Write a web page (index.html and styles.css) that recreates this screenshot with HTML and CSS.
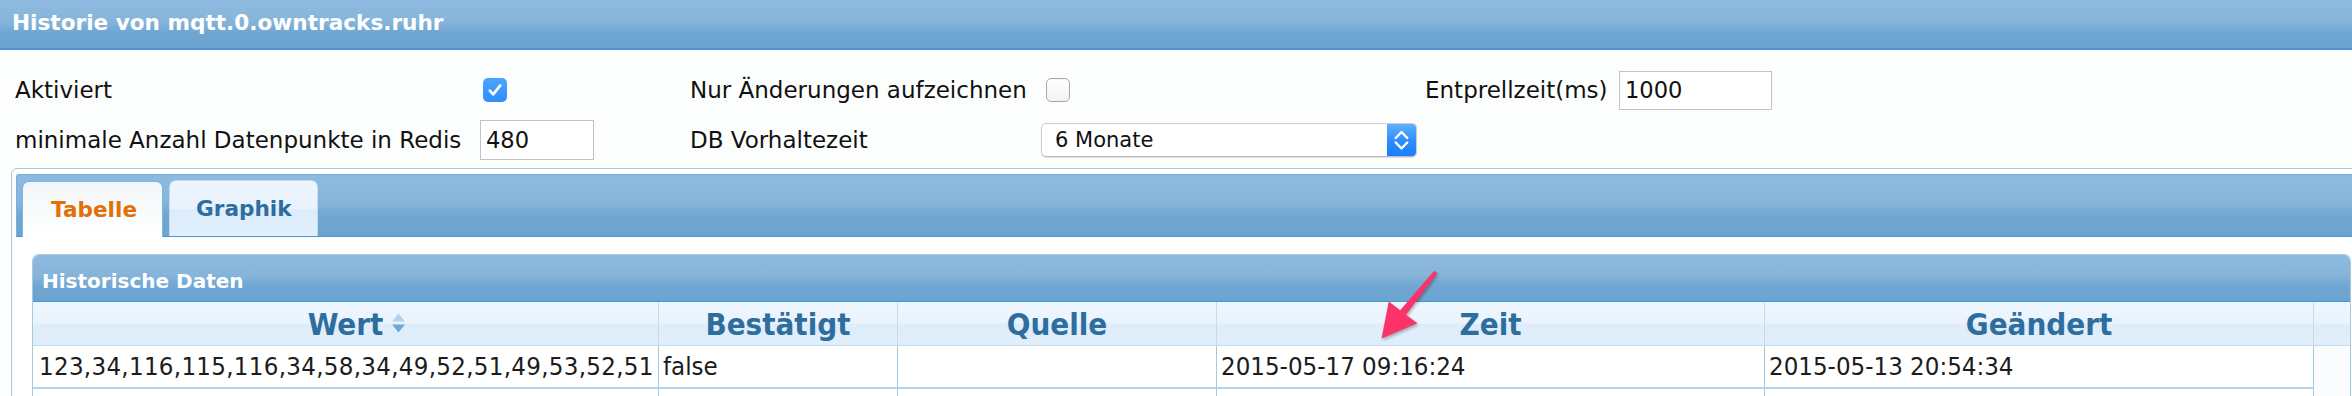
FILE: index.html
```html
<!DOCTYPE html>
<html lang="de">
<head>
<meta charset="utf-8">
<title>Historie von mqtt.0.owntracks.ruhr</title>
<link rel="stylesheet" href="styles.css">
</head>
<body>
<div class="page">
  <div class="titlebar wave">Historie von mqtt.0.owntracks.ruhr</div>

  <div class="form">
    <div class="lbl">Aktiviert</div>
    <div class="cell"><span class="cb checked"><svg width="24" height="24" viewBox="0 0 24 24"><path d="M6.8 12.6 L10.2 16.4 L17.3 7.4" fill="none" stroke="#fff" stroke-width="2.6" stroke-linecap="round" stroke-linejoin="round"/></svg></span></div>
    <div class="lbl">Nur Änderungen aufzeichnen</div>
    <div class="cell"><span class="cb unchecked"></span></div>
    <div class="lbl">Entprellzeit(ms)</div>
    <div class="cell"><input class="txt txt-wide" type="text" value="1000"></div>

    <div class="lbl">minimale Anzahl Datenpunkte in Redis</div>
    <div class="cell"><input class="txt txt-narrow" type="text" value="480"></div>
    <div class="lbl">DB Vorhaltezeit</div>
    <div class="cell">
      <div class="select">
        <span class="select-text">6 Monate</span>
        <span class="stepper"><svg width="29" height="34" viewBox="0 0 29 34"><path d="M8.7 15 L14.5 9 L20.3 15 M8.7 19.5 L14.5 25.5 L20.3 19.5" fill="none" stroke="#fff" stroke-width="2.4" stroke-linecap="round" stroke-linejoin="round"/></svg></span>
      </div>
    </div>
    <div class="cell"></div>
    <div class="cell"></div>
  </div>

  <div class="tabs">
    <div class="tabnav wave">
      <div class="tab tab-active">Tabelle</div>
      <div class="tab tab-idle">Graphik</div>
    </div>
    <div class="panel">
      <div class="gridbox">
        <div class="caption wave">Historische Daten</div>
        <table class="data">
          <colgroup>
            <col class="c1"><col class="c2"><col class="c3"><col class="c4"><col class="c5"><col class="c6">
          </colgroup>
          <thead>
            <tr>
              <th><span class="sortable">Wert<span class="sorticon"><svg width="15" height="20" viewBox="0 0 15 20"><path d="M7.5 0.5 L14 8.5 L1 8.5 Z" fill="#b3d2ec"/><path d="M1 11.5 L14 11.5 L7.5 19.5 Z" fill="#6ea8d8"/></svg></span></span></th>
              <th>Bestätigt</th>
              <th>Quelle</th>
              <th>Zeit</th>
              <th>Geändert</th>
              <th class="gutter-h"></th>
            </tr>
          </thead>
          <tbody>
            <tr>
              <td class="first">123,34,116,115,116,34,58,34,49,52,51,49,53,52,51</td>
              <td>false</td>
              <td></td>
              <td>2015-05-17 09:16:24</td>
              <td>2015-05-13 20:54:34</td>
              <td class="gutter"></td>
            </tr>
            <tr>
              <td class="first"></td>
              <td></td>
              <td></td>
              <td></td>
              <td></td>
              <td class="gutter"></td>
            </tr>
          </tbody>
        </table>
      </div>
    </div>
  </div>

  <svg class="arrow" width="2352" height="396" viewBox="0 0 2352 396">
    <path d="M1433.6 271.6 Q1435.3 270.6 1436.6 272.2 Q1437.4 273.4 1436.4 274.6 L1406 314.8 L1417.5 323.2 L1381.5 338.5 L1388.8 301.5 L1400.2 310.2 Z" fill="#fc3268"/>
  </svg>
</div>
</body>
</html>
```

FILE: styles.css
```css
html, body {
  margin: 0;
  padding: 0;
  overflow: hidden;
  background: #fcfdfd;
}

.page {
  position: relative;
  width: 2372px;
  font-family: "DejaVu Sans", "Liberation Sans", sans-serif;
  color: #1e1e1e;
}

.wave {
  background: linear-gradient(180deg, #8dbade 0%, #88b6db 38%, #82b2d9 50%, #76abd5 58%, #6fa6d2 70%, #6ca4d1 100%);
}

.titlebar {
  height: 48px;
  line-height: 45px;
  border-bottom: 2px solid #4a94d4;
  padding-left: 12px;
  color: #fff;
  font-weight: bold;
  font-size: 21.6px;
  white-space: nowrap;
}

.form {
  display: grid;
  grid-template-columns: 464px 211px 351px 384px 194px 200px;
  grid-template-rows: 50px 50px;
  align-items: center;
  padding: 15px 0 3px 15px;
  font-size: 23px;
  color: #111;
  background: #fcfefd;
}

.lbl {
  white-space: nowrap;
}

.cell {
  display: flex;
  align-items: center;
}

.cb {
  display: block;
  width: 24px;
  height: 24px;
  box-sizing: border-box;
  border-radius: 5px;
}

.cb svg {
  display: block;
}

.cb.checked {
  margin-left: 4px;
  background: linear-gradient(180deg, #4ba4fe 0%, #2f8dfc 100%);
}

.cb.unchecked {
  margin-left: 5px;
  border: 1px solid #a9a9a9;
  background: linear-gradient(180deg, #ffffff 0%, #f3f3f3 100%);
  box-shadow: inset 0 1px 1px rgba(0, 0, 0, 0.05);
}

.txt {
  display: block;
  box-sizing: border-box;
  margin: 0;
  border: 1px solid #c3c3c3;
  background: #fff;
  font-family: "DejaVu Sans", "Liberation Sans", sans-serif;
  font-size: 22.6px;
  color: #111;
  padding: 0 0 0 5px;
  outline: none;
}

.txt-narrow {
  width: 114px;
  height: 40px;
  margin-left: 1px;
}

.txt-wide {
  width: 153px;
  height: 39px;
}

.select {
  display: flex;
  width: 376px;
  height: 34px;
  box-sizing: border-box;
  border: 1px solid #cfcfcf;
  border-bottom-color: #b9b9b9;
  border-radius: 5px;
  background: #fff;
  box-shadow: 0 1px 1px rgba(0, 0, 0, 0.12);
  overflow: hidden;
}

.select-text {
  flex: 1;
  padding-left: 13px;
  font-size: 21px;
  line-height: 32px;
  color: #111;
}

.stepper {
  width: 29px;
  background: linear-gradient(180deg, #5eb0fe 0%, #2b8cfc 55%, #1a7ffb 100%);
}

.stepper svg {
  display: block;
  margin-top: -1px;
}

/* Tabs */
.tabs {
  margin-left: 11px;
  border: 1px solid #a6c9e2;
  border-radius: 6px 6px 0 0;
  padding: 5px 4px 0 4px;
  background: #fff;
}

.tabnav {
  display: flex;
  align-items: flex-end;
  gap: 6px;
  height: 63px;
  box-sizing: border-box;
  padding-left: 5px;
  border: 1px solid #78afdc;
  border-bottom-color: #4297d7;
  border-radius: 3px 3px 0 0;
}

.tab {
  height: 56px;
  box-sizing: border-box;
  border: 1px solid #c5dbec;
  border-bottom: 0;
  border-radius: 7px 7px 0 0;
  line-height: 55px;
  font-size: 21.6px;
  font-weight: bold;
  white-space: nowrap;
}

.tab-active {
  margin-bottom: -1px;
  padding: 0 25px 0 28px;
  border-color: #79b7e7;
  background: linear-gradient(180deg, #f3f6f8 0%, #f8fafb 50%, #ffffff 100%);
  color: #e17009;
}

.tab-idle {
  padding: 0 25px 0 26px;
  background: linear-gradient(180deg, #edf5fe 0%, #e9f3fd 50%, #dcecfb 52%, #e2effc 100%);
  color: #2e6e9e;
}

.panel {
  padding: 17px 16px 0 16px;
  background: #fff;
}

.gridbox {
  border: 1px solid #a6c9e2;
  border-bottom: 0;
  border-radius: 7px 7px 0 0;
  overflow: hidden;
}

.caption {
  height: 40px;
  padding: 6px 0 0 9px;
  line-height: 40px;
  border-bottom: 1px solid #4297d7;
  color: #fff;
  font-weight: bold;
  font-size: 20px;
  white-space: nowrap;
}

.data {
  table-layout: fixed;
  border-collapse: separate;
  border-spacing: 0;
  width: 2317px;
}

.c1 { width: 626px; }
.c2 { width: 239px; }
.c3 { width: 319px; }
.c4 { width: 548px; }
.c5 { width: 549px; }
.c6 { width: 36px; }

.data th {
  height: 44px;
  padding: 0;
  box-sizing: border-box;
  border-right: 1px solid #c5dbec;
  border-bottom: 1px solid #c5dbec;
  background: linear-gradient(180deg, #eef6fe 0%, #ebf4fd 48%, #dfedfb 52%, #e0eefb 100%);
  color: #2e6e9e;
  font-family: "DejaVu Sans Condensed", "DejaVu Sans", sans-serif;
  font-stretch: condensed;
  font-weight: bold;
  font-size: 31px;
  line-height: 42px;
  text-align: center;
  white-space: nowrap;
}

.data th.gutter-h {
  border-right: 0;
}

.sortable {
  position: relative;
  display: inline-block;
}

.sorticon {
  position: absolute;
  left: 100%;
  top: 10px;
  margin-left: 8px;
  width: 15px;
  height: 20px;
}

.sorticon svg {
  display: block;
}

.data td {
  height: 43px;
  padding: 0 0 0 4px;
  box-sizing: border-box;
  border-right: 1px solid #a6c9e2;
  border-bottom: 2px solid #b3d1e8;
  background: #fff;
  color: #1c1c1c;
  font-family: "DejaVu Sans Condensed", "DejaVu Sans", sans-serif;
  font-stretch: condensed;
  font-size: 25.6px;
  line-height: 41px;
  white-space: nowrap;
  overflow: hidden;
}

.data td.first {
  padding-left: 6px;
  border-left: 0;
  letter-spacing: 0.3px;
}

.data td.gutter {
  border: 0;
  background: #fbfcfd;
}

.arrow {
  position: absolute;
  left: 0;
  top: 0;
  pointer-events: none;
  filter: drop-shadow(1px 2px 1.5px rgba(0, 0, 0, 0.28));
}
```
